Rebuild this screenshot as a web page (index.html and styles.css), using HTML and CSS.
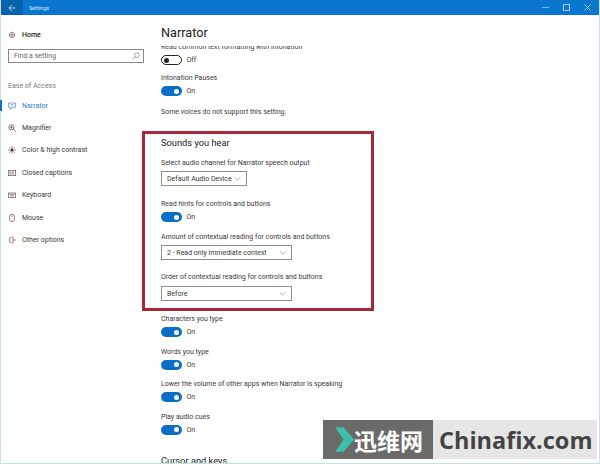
FILE: index.html
```html
<!DOCTYPE html>
<html lang="en">
<head>
  <meta charset="UTF-8" />
  <title>Settings</title>
  <link rel="stylesheet" href="styles.css">
</head>
<body>
  <div class="window">
    <header class="titlebar">
      <div class="back-btn">
        <svg width="8" height="8" viewBox="0 0 9 9"><path d="M8.500 4.500H1M4.500 1L1 4.500L4.500 8" fill="none" stroke="#c4dcf2" stroke-width="1"/></svg>
      </div>
      <span class="title-text">Settings</span>
      <div class="win-controls">
        <svg width="7" height="7" viewBox="0 0 8 8"><path d="M0 4h8" stroke="#8fc0ea" stroke-width="1"/></svg>
        <svg width="7" height="7" viewBox="0 0 8 8"><rect x="0.500" y="0.500" width="7" height="7" fill="none" stroke="#b5d6f2" stroke-width="1"/></svg>
        <svg width="7" height="7" viewBox="0 0 8 8"><path d="M0.500 0.500l7 7M7.500 0.500l-7 7" stroke="#b5d6f2" stroke-width="1"/></svg>
      </div>
    </header>

    <div class="app">
      <nav class="sidebar">
        <div class="nav-item home">
          <svg class="nav-icon" viewBox="0 0 12 12"><circle cx="6" cy="6" r="4" fill="none" stroke="#444" stroke-width="1.500" stroke-dasharray="1.800 .6"/><circle cx="6" cy="6" r="1.800" fill="none" stroke="#444"/></svg>
          <span>Home</span>
        </div>
        <div class="search">
          <span>Find a setting</span>
          <svg width="8" height="8" viewBox="0 0 9 9"><circle cx="5.500" cy="3.500" r="2.700" fill="none" stroke="#888" stroke-width=".8"/><path d="M3.500 5.500L.8 8.200" stroke="#888" stroke-width=".8"/></svg>
        </div>
        <div class="nav-heading">Ease of Access</div>
        <div class="nav-item active">
          <svg class="nav-icon" viewBox="0 0 12 12"><path d="M1 1.500h10v7H6.500L4 11V8.500H1z" fill="none" stroke="#2a7fc0" stroke-width="1"/><path d="M4 4h4M4 6h3" stroke="#2a7fc0" stroke-width=".8"/></svg>
          <span>Narrator</span>
        </div>
        <div class="nav-item">
          <svg class="nav-icon" viewBox="0 0 12 12"><circle cx="5" cy="5" r="3.800" fill="none" stroke="#444" stroke-width="1.100"/><path d="M7.800 7.800L11.500 11.500M3 5h4M5 3v4" stroke="#444" stroke-width="1.100"/></svg>
          <span>Magnifier</span>
        </div>
        <div class="nav-item">
          <svg class="nav-icon" viewBox="0 0 12 12"><circle cx="6" cy="6" r="2.500" fill="#444"/><path d="M6 0v2.500M6 9.500V12M0 6h2.500M9.500 6H12M1.800 1.800l1.800 1.800M8.400 8.400l1.800 1.800M10.200 1.800L8.400 3.600M3.600 8.400l-1.800 1.800" stroke="#444" stroke-width="1"/></svg>
          <span>Color &amp; high contrast</span>
        </div>
        <div class="nav-item">
          <svg class="nav-icon" viewBox="0 0 12 12"><rect x=".5" y="2" width="11" height="8" fill="none" stroke="#555" stroke-width="1"/><path d="M5.200 4.300H3v3.400h2.200M9.200 4.300H7v3.400h2.200" fill="none" stroke="#555" stroke-width="1"/></svg>
          <span>Closed captions</span>
        </div>
        <div class="nav-item">
          <svg class="nav-icon" viewBox="0 0 12 12"><rect x=".5" y="3" width="11" height="6.500" fill="none" stroke="#555" stroke-width="1"/><path d="M2 5h8M3 7.300h6" stroke="#555" stroke-width="1"/></svg>
          <span>Keyboard</span>
        </div>
        <div class="nav-item">
          <svg class="nav-icon" viewBox="0 0 12 12"><rect x="2.500" y=".5" width="7" height="11" rx="3.500" fill="none" stroke="#444" stroke-width="1"/><path d="M6 2.500v2.500" stroke="#444" stroke-width="1"/></svg>
          <span>Mouse</span>
        </div>
        <div class="nav-item">
          <svg class="nav-icon" viewBox="0 0 12 12"><path d="M9 3A4.200 4.200 0 1 0 9 9" fill="none" stroke="#555" stroke-width="1"/><path d="M6 6h5.500M8.500 4v4" stroke="#555" stroke-width=".9"/></svg>
          <span>Other options</span>
        </div>
      </nav>

      <main class="content">
        <h1 class="page-title">Narrator</h1>
        <div class="scroller">
          <div class="settings">
            <div class="setting first">
              <div class="label">Read common text formatting with intonation</div>
              <div class="toggle-row"><span class="toggle off"></span><span>Off</span></div>
            </div>
            <div class="setting">
              <div class="label">Intonation Pauses</div>
              <div class="toggle-row"><span class="toggle"></span><span>On</span></div>
            </div>
            <p class="note">Some voices do not support this setting.</p>

            <h2 class="section-title">Sounds you hear</h2>
            <div class="setting drop">
              <div class="label">Select audio channel for Narrator speech output</div>
              <div class="select small"><span>Default Audio Device</span><svg class="chev" viewBox="0 0 8 5"><path d="M.5 .5L4 4L7.500 .5" fill="none" stroke="#777" stroke-width=".8"/></svg></div>
            </div>
            <div class="setting">
              <div class="label">Read hints for controls and buttons</div>
              <div class="toggle-row"><span class="toggle"></span><span>On</span></div>
            </div>
            <div class="setting drop tight">
              <div class="label">Amount of contextual reading for controls and buttons</div>
              <div class="select"><span>2 - Read only immediate context</span><svg class="chev" viewBox="0 0 8 5"><path d="M.5 .5L4 4L7.500 .5" fill="none" stroke="#777" stroke-width=".8"/></svg></div>
            </div>
            <div class="setting drop last">
              <div class="label">Order of contextual reading for controls and buttons</div>
              <div class="select"><span>Before</span><svg class="chev" viewBox="0 0 8 5"><path d="M.5 .5L4 4L7.500 .5" fill="none" stroke="#777" stroke-width=".8"/></svg></div>
            </div>

            <div class="setting">
              <div class="label">Characters you type</div>
              <div class="toggle-row"><span class="toggle"></span><span>On</span></div>
            </div>
            <div class="setting">
              <div class="label">Words you type</div>
              <div class="toggle-row"><span class="toggle"></span><span>On</span></div>
            </div>
            <div class="setting">
              <div class="label">Lower the volume of other apps when Narrator is speaking</div>
              <div class="toggle-row"><span class="toggle"></span><span>On</span></div>
            </div>
            <div class="setting">
              <div class="label">Play audio cues</div>
              <div class="toggle-row"><span class="toggle"></span><span>On</span></div>
            </div>
            <h2 class="section-title next">Cursor and keys</h2>
          </div>
        </div>
      </main>
    </div>
  </div>

  <!-- annotation + watermark sit on top of the screenshot -->
  <div class="highlight"></div>
  <div class="watermark">
    <div class="wm-dark">
      <svg width="19" height="25" viewBox="0 0 20 26"><path d="M0 0H9L20 13L9 26H0L9 13z" fill="#3dbfa8"/></svg>
      <span>迅维网</span>
    </div>
    <div class="wm-light">Chinafix.com</div>
  </div>
</body>
</html>
```

FILE: styles.css
```css
* {
  box-sizing: border-box;
}

html, body {
  margin: 0;
  height: 100%;
  overflow: hidden;
}

body {
  width: 600px;
  height: 464px;
  font-family: Roboto, "Noto Sans", sans-serif;
  font-size: 7px;
  color: #3a3a3a;
  background: #fff;
}

.window {
  height: 464px;
  display: flex;
  flex-direction: column;
  border-left: 1px solid #c4e4e4;
  border-right: 1px solid #c4e4e4;
  border-bottom: 1px solid #c4e4e4;
}

.titlebar {
  height: 15px;
  flex: none;
  display: flex;
  align-items: center;
  background: #0a76d0;
  color: #d6e8f8;
  font-size: 5.500px;
}

.back-btn {
  width: 22px;
  height: 15px;
  display: flex;
  align-items: center;
  justify-content: center;
  background: #0562ad;
}

.title-text {
  margin-left: 6px;
}

.win-controls {
  margin-left: auto;
  margin-right: 8px;
  display: flex;
  align-items: center;
  gap: 14px;
}

.app {
  flex: 1;
  min-height: 0;
  display: flex;
}

.sidebar {
  width: 150px;
  flex: none;
  padding-top: 13px;
}

.nav-item {
  height: 22.500px;
  display: flex;
  align-items: center;
  padding-left: 7px;
  gap: 6px;
}

.nav-item.home {
  height: 13px;
  margin-bottom: 8px;
  color: #222;
  font-weight: 500;
}

.nav-item.active {
  color: #2a7fc0;
  box-shadow: inset 2px 0 0 #0a76d0;
  margin-left: -1px;
  padding-left: 8px;
  height: 11px;
  margin-bottom: 5.500px;
}

.nav-icon {
  width: 8px;
  height: 8px;
  flex: none;
}

.search {
  margin: 0 7px 0 7px;
  height: 14px;
  border: 1px solid #8a8a8a;
  display: flex;
  align-items: center;
  justify-content: space-between;
  padding: 0 3px 0 5px;
  color: #666;
}

.nav-heading {
  margin: 18px 0 8px 7px;
  height: 11px;
  line-height: 11px;
  color: #777;
}

.content {
  flex: 1;
  min-width: 0;
  padding-left: 10px;
  display: flex;
  flex-direction: column;
}

.page-title {
  margin: 7px 0 0;
  height: 23.500px;
  line-height: 22px;
  font-size: 12.700px;
  font-weight: 400;
  color: #222;
  flex: none;
}

.scroller {
  flex: 1;
  min-height: 0;
  overflow: hidden;
}

/* list is scrolled a little, first label gets cut by the page title */
.settings {
  margin-top: -4.500px;
}

.setting {
  margin-bottom: 6.500px;
}

.setting.first {
  margin-bottom: 5px;
}

.label {
  height: 12px;
  line-height: 12px;
  white-space: nowrap;
}

.toggle-row {
  height: 14px;
  display: flex;
  align-items: center;
  gap: 5px;
}

.toggle {
  position: relative;
  width: 20.500px;
  height: 10px;
  border-radius: 5px;
  background: #0a6fc4;
}

.toggle::after {
  content: "";
  position: absolute;
  top: 2.500px;
  right: 2.500px;
  width: 5px;
  height: 5px;
  border-radius: 50%;
  background: #fff;
}

.toggle.off {
  background: #fff;
  border: 1px solid #222;
}

.toggle.off::after {
  top: 1.500px;
  left: 2px;
  right: auto;
  background: #222;
}

.note {
  margin: 8px 0 0;
  height: 12px;
  line-height: 12px;
}

.section-title {
  margin: 18px 0 7px;
  height: 14px;
  line-height: 14px;
  font-size: 9.300px;
  font-weight: 400;
  color: #222;
}

.section-title.next {
  margin-top: 17px;
}

.setting.drop {
  margin-bottom: 12px;
}

.setting.drop.tight {
  margin-bottom: 11px;
}

.select {
  width: 131px;
  height: 15px;
  margin-top: 2px;
  border: 1px solid #8f8f8f;
  display: flex;
  align-items: center;
  justify-content: space-between;
  padding: 0 5px;
  white-space: nowrap;
}

.tight .select {
  margin-top: 2.500px;
}

.last .select {
  margin-top: 3px;
}

.select.small {
  width: 86px;
}

.chev {
  width: 7px;
  height: 4px;
}

.highlight {
  position: absolute;
  left: 142px;
  top: 131px;
  width: 231.500px;
  height: 180px;
  border: 3px solid #a8283a;
  pointer-events: none;
}

.watermark {
  position: absolute;
  left: 323px;
  top: 420px;
  width: 274px;
  height: 39px;
  display: flex;
}

.wm-dark {
  width: 110px;
  flex: none;
  background: #6a6a68;
  display: flex;
  align-items: center;
  padding-left: 12px;
  color: #fff;
  font-family: "Noto Sans CJK SC", sans-serif;
  font-weight: 700;
  font-size: 23px;
}

.wm-light {
  flex: 1;
  background: #e6e6e6;
  display: flex;
  align-items: center;
  padding-left: 6px;
  color: #444;
  font-family: "Open Sans", sans-serif;
  font-weight: 700;
  font-size: 23.500px;
  white-space: nowrap;
}
```
